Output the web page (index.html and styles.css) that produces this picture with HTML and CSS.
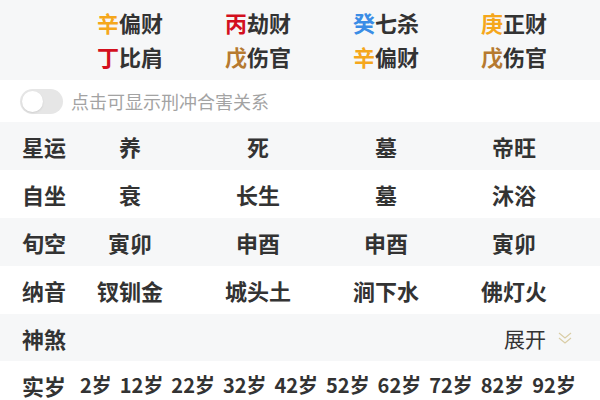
FILE: index.html
```html
<!DOCTYPE html>
<html lang="zh">
<head>
<meta charset="utf-8">
<link rel="stylesheet" href="styles.css">
</head>
<body>
<div class="gods">
  <div class="row">
    <div></div>
    <div class="cell"><span class="c-xin">辛</span>偏财</div>
    <div class="cell"><span class="c-red">丙</span>劫财</div>
    <div class="cell"><span class="c-blue">癸</span>七杀</div>
    <div class="cell"><span class="c-xin">庚</span>正财</div>
  </div>
  <div class="row">
    <div></div>
    <div class="cell"><span class="c-red">丁</span>比肩</div>
    <div class="cell"><span class="c-brown">戊</span>伤官</div>
    <div class="cell"><span class="c-xin">辛</span>偏财</div>
    <div class="cell"><span class="c-brown">戊</span>伤官</div>
  </div>
</div>
<div class="toggle-row">
  <span class="switch"><span class="knob"></span></span>
  <span class="toggle-text">点击可显示刑冲合害关系</span>
</div>
<div class="table">
  <div class="trow gray">
    <div class="label">星运</div>
    <div class="cell">养</div><div class="cell">死</div><div class="cell">墓</div><div class="cell">帝旺</div>
  </div>
  <div class="trow">
    <div class="label">自坐</div>
    <div class="cell">衰</div><div class="cell">长生</div><div class="cell">墓</div><div class="cell">沐浴</div>
  </div>
  <div class="trow gray">
    <div class="label">旬空</div>
    <div class="cell">寅卯</div><div class="cell">申酉</div><div class="cell">申酉</div><div class="cell">寅卯</div>
  </div>
  <div class="trow">
    <div class="label">纳音</div>
    <div class="cell">钗钏金</div><div class="cell">城头土</div><div class="cell">涧下水</div><div class="cell">佛灯火</div>
  </div>
  <div class="srow gray">
    <div class="label">神煞</div>
    <div class="expand">展开
      <svg class="chev" width="16" height="14" viewBox="0 0 16 14"><path d="M2 2 L8 7 L14 2 M2 7 L8 12 L14 7" fill="none" stroke="#d9cda6" stroke-width="1.2"/></svg>
    </div>
  </div>
  <div class="arow">
    <div class="label">实岁</div>
    <div class="ages">
      <span>2岁</span><span>12岁</span><span>22岁</span><span>32岁</span><span>42岁</span><span>52岁</span><span>62岁</span><span>72岁</span><span>82岁</span><span>92岁</span>
    </div>
  </div>
</div>
</body>
</html>
```

FILE: styles.css
```css
* { box-sizing: border-box; }
body {
  margin: 0;
  width: 600px;
  height: 400px;
  overflow: hidden;
  background: #fff;
  font-family: "Noto Sans CJK SC", "Noto Sans", sans-serif;
  color: #333;
}
.gods {
  background: #f6f7f8;
  padding: 5px 0 7px;
  height: 80px;
}
.row {
  display: grid;
  grid-template-columns: 66px repeat(4, 128px);
  height: 34px;
  align-items: center;
}
.cell {
  text-align: center;
  font-size: 22px;
  font-weight: 700;
  line-height: 1;
  color: #333;
}
.c-xin { color: #f5a71c; }
.c-red { color: #d3101e; }
.c-blue { color: #3a8de6; }
.c-brown { color: #b67a30; }
.toggle-row {
  height: 42px;
  display: flex;
  align-items: center;
  padding-left: 20px;
}
.switch {
  width: 43px;
  height: 25px;
  border-radius: 13px;
  background: #e6e6e6;
  display: flex;
  align-items: center;
  padding-left: 2px;
}
.knob {
  width: 21px;
  height: 21px;
  border-radius: 50%;
  background: #fff;
  box-shadow: 0 1px 2px rgba(0,0,0,0.1);
}
.toggle-text {
  margin-left: 8px;
  font-size: 18px;
  color: #a3a3a3;
}
.trow {
  display: grid;
  grid-template-columns: 66px repeat(4, 128px);
  height: 48px;
  align-items: center;
}
.gray { background: #f6f7f8; }
.label {
  padding-left: 22px;
  font-size: 22px;
  font-weight: 700;
  line-height: 1;
  white-space: nowrap;
}
.srow {
  height: 47px;
  display: flex;
  align-items: center;
  justify-content: space-between;
  padding-right: 27px;
}
.expand {
  display: flex;
  align-items: center;
  font-size: 21px;
  color: #333;
}
.chev { margin-left: 11px; }
.arow {
  height: 48px;
  display: flex;
  align-items: center;
  padding-right: 24px;
}
.ages {
  flex: 1;
  display: flex;
  justify-content: space-between;
  margin-left: 14px;
  font-size: 20px;
  font-weight: 700;
  line-height: 1;
}
```
